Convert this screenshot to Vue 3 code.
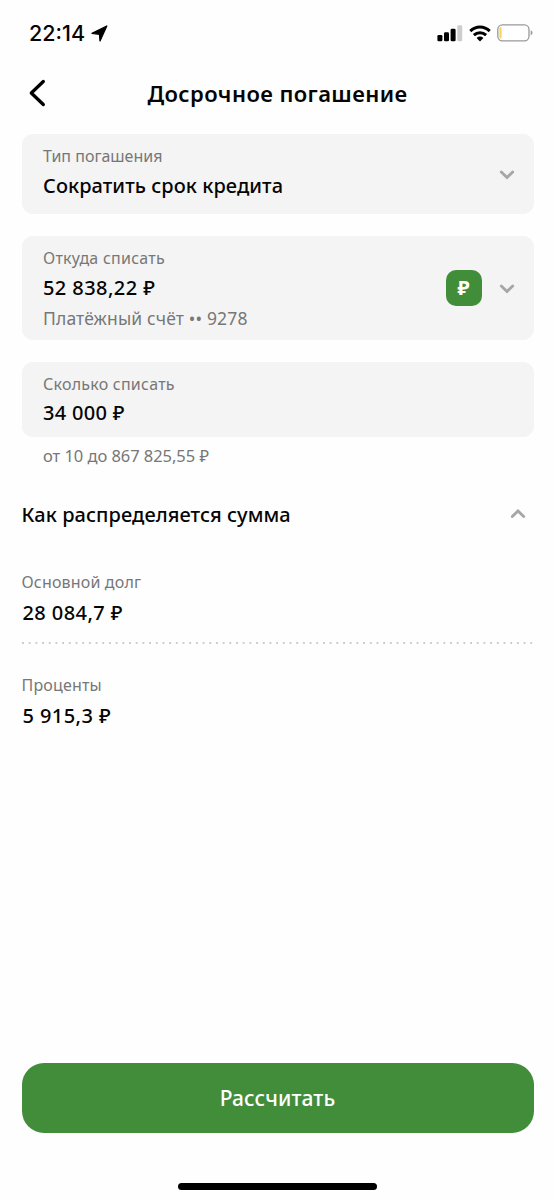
<script setup>
const parts = [
  { id: 'principal', label: 'Основной долг', value: '28 084,7 ₽' },
  { id: 'interest', label: 'Проценты', value: '5 915,3 ₽' },
]
</script>

<template>
  <div class="screen">
    <header class="status">
      <span class="time">22:14</span>
      <svg class="location" width="18" height="18" viewBox="0 0 18 18">
        <path d="M15.8 1 L9 15.900 L8.500 9.300 L1 8.300 Z" stroke="#000" stroke-width="1.3" stroke-linejoin="round" />
      </svg>
      <span class="spacer"></span>
      <svg class="signal" width="26" height="17" viewBox="0 0 26 17">
        <rect x="0.4" y="10" width="5" height="6.300" rx="1.3" />
        <rect x="7" y="7.2" width="5" height="9.100" rx="1.3" />
        <rect x="13.6" y="3.800" width="5" height="12.500" rx="1.3" />
        <rect x="20.300" y="0.300" width="4.900" height="16" rx="1.3" fill="#cdcdcd" />
      </svg>
      <svg class="wifi" width="22" height="17" viewBox="0 0 22 17">
        <g fill="none" stroke="#000" stroke-width="3">
          <path d="M1.3 6.1 C6.8 .6 15.2 .6 20.7 6.1" />
          <path d="M4.9 10.1 C8.4 6.800 13.6 6.800 17.1 10.1" />
        </g>
        <path d="M7.6 12.900 Q11 10.200 14.4 12.900 L11.5 16 Q11 16.4 10.5 16 Z" />
      </svg>
      <svg class="battery" width="36" height="18" viewBox="0 0 36 18">
        <rect x="0.8" y="0.8" width="31.2" height="16" rx="4.6" fill="#fff" stroke="#999" stroke-width="1.3" />
        <rect x="2.4" y="3" width="2.2" height="11.6" rx="1" fill="#f9d45c" />
        <path d="M33.7 6.2 Q35.5 7 35.5 8.8 Q35.5 10.600 33.7 11.4 Z" fill="#999" />
      </svg>
    </header>

    <nav class="nav">
      <svg class="back" width="18" height="28" viewBox="0 0 18 28">
        <path d="M15.300 2.500 L3.300 14 L15.300 25.500" fill="none" stroke="#000" stroke-width="3.3" stroke-linecap="round" stroke-linejoin="round" />
      </svg>
      <h1 class="title"><span>Досрочное погашение</span></h1>
    </nav>

    <main class="content">
      <section class="card type">
        <div class="texts">
          <span class="label l-type">Тип погашения</span>
          <span class="value v-type">Сократить срок кредита</span>
        </div>
        <svg class="chevron" width="16" height="12" viewBox="0 0 16 12">
          <path d="M2.300 3.900 L8 9.500 L13.700 3.900" />
        </svg>
      </section>

      <section class="card source">
        <div class="texts">
          <span class="label l-source">Откуда списать</span>
          <span class="value v-source">52 838,22 ₽</span>
          <span class="account">Платёжный счёт •• 9278</span>
        </div>
        <span class="coin">₽</span>
        <svg class="chevron" width="16" height="12" viewBox="0 0 16 12">
          <path d="M2.300 3.900 L8 9.500 L13.700 3.900" />
        </svg>
      </section>

      <section class="card amount">
        <div class="texts">
          <span class="label l-amount">Сколько списать</span>
          <span class="value v-amount">34 000 ₽</span>
        </div>
      </section>
      <p class="hint">от 10 до 867 825,55 ₽</p>

      <div class="heading">
        <h2>Как распределяется сумма</h2>
        <svg class="chevron" width="16" height="12" viewBox="0 0 16 12">
          <path d="M2.300 7.500 L8 1.900 L13.700 7.500" />
        </svg>
      </div>

      <div v-for="part in parts" :key="part.id" class="part" :class="part.id">
        <span class="label">{{ part.label }}</span>
        <span class="value">{{ part.value }}</span>
      </div>
    </main>

    <footer class="footer">
      <button class="submit"><span>Рассчитать</span></button>
      <div class="home"></div>
    </footer>
  </div>
</template>

<style>
html,
body {
  margin: 0;
  background: #fff;
}
</style>

<style scoped>
.screen {
  display: flex;
  flex-direction: column;
  box-sizing: border-box;
  width: 555px;
  height: 1200px;
  overflow: hidden;
  background: #fefefe;
  color: #050505;
  font-family: "Noto Sans", sans-serif;
}
.status {
  display: flex;
  align-items: flex-start;
  height: 68px;
  padding: 0 22px 0 29px;
  box-sizing: border-box;
}
.time {
  margin-top: 21px;
  font: 500 21.5px/25px Inter, sans-serif;
  width: 62px;
}
.location { margin-top: 25px; }
.spacer { flex: 1; }
.signal { margin: 25px 6px 0 0; }
.wifi { margin: 25px 6px 0 0; }
.battery { margin: 24px 0 0; }
.nav {
  display: flex;
  align-items: center;
  height: 50px;
  padding: 0 28px;
}
.title {
  flex: 1;
  margin: 0 18px 0 0;
  text-align: center;
  font-size: 22px;
  font-weight: 600;
  line-height: 30px;
  letter-spacing: 0.42px;
  white-space: nowrap;
}
.content {
  flex: 1;
  padding: 16px 21.5px 0;
}
.card {
  display: flex;
  align-items: center;
  box-sizing: border-box;
  padding: 0 19px 0 21.5px;
  border-radius: 11px;
  background: #f4f4f4;
}
.texts {
  flex: 1;
  display: flex;
  flex-direction: column;
  align-items: flex-start;
  align-self: flex-start;
}
.label,
.value,
.account,
.hint {
  line-height: 24px;
  white-space: nowrap;
}
.label {
  font-size: 16px;
  font-weight: 450;
  color: #777;
}
.value {
  font-size: 20px;
  font-weight: 500;
  letter-spacing: 0.42px;
}
.account {
  font-size: 17.5px;
  font-weight: 450;
  letter-spacing: 0.14px;
  color: #777;
}
.l-source,
.l-amount { letter-spacing: 0.24px; }
.v-type { letter-spacing: 0.06px; }
.v-amount { letter-spacing: 0.3px; }
.type { height: 80px; }
.type .texts { padding-top: 10px; gap: 6px; }
.source { height: 104px; margin-top: 22px; }
.source .texts { padding-top: 10px; gap: 6px; }
.amount { height: 75px; margin-top: 21.5px; }
.amount .texts { padding-top: 10px; gap: 5px; }
.chevron { flex: none; }
.chevron path {
  fill: none;
  stroke: #a6a6a6;
  stroke-width: 2.8;
  stroke-linecap: round;
}
.coin {
  width: 36px;
  height: 36px;
  margin-right: 17px;
  border-radius: 10px;
  background: #428d3a;
  color: #fff;
  font-size: 20px;
  font-weight: 700;
  line-height: 35px;
  text-align: center;
}
.hint {
  margin: 7.5px 0 0 21.5px;
  font-size: 16.5px;
  font-weight: 450;
  letter-spacing: -0.05px;
  color: #777;
}
.heading {
  display: flex;
  align-items: center;
  justify-content: space-between;
  margin-top: 34.5px;
  padding-right: 8px;
}
.heading h2 {
  margin: 0;
  font-size: 20px;
  font-weight: 500;
  line-height: 24px;
  letter-spacing: 0.07px;
}
.part {
  display: flex;
  flex-direction: column;
  align-items: flex-start;
  gap: 7px;
}
.part .label { letter-spacing: 0.17px; }
.part .value { margin-left: 1px; }
.principal {
  height: 74px;
  margin-top: 43.5px;
  background: radial-gradient(circle at 1px 1px, #b5b5b5 0.5px, transparent 1.1px) 0 100% / 6.7px 2px repeat-x;
}
.interest { margin-top: 29px; }
.footer {
  display: flex;
  flex-direction: column;
  align-items: center;
  height: 137px;
}
.submit {
  flex: none;
  width: 512px;
  height: 70px;
  padding: 0;
  border: 0;
  border-radius: 22px;
  background: #428d3a;
  color: #fff;
  font: 500 21px/70px "Noto Sans", sans-serif;
  letter-spacing: 0.1px;
}
.home {
  width: 199px;
  height: 7px;
  margin-top: 49.5px;
  border-radius: 4px;
  background: #000;
}
</style>
